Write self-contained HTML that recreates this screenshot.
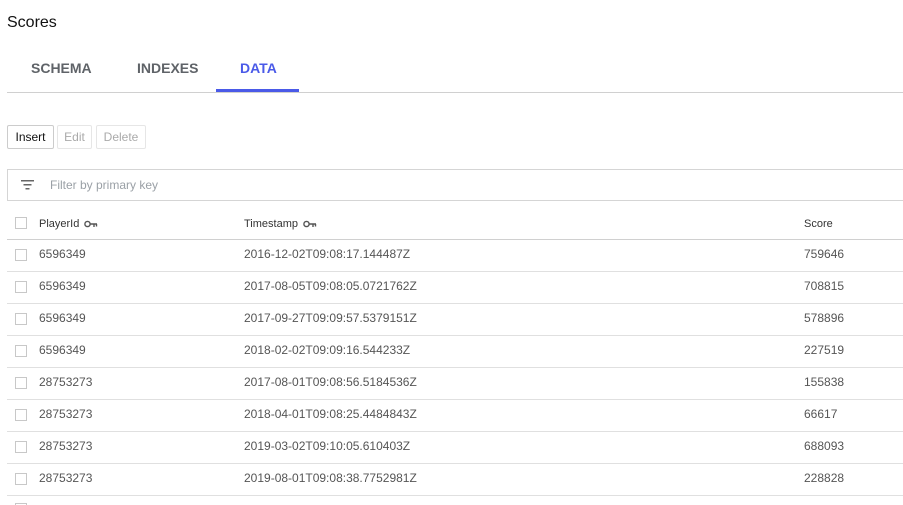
<!DOCTYPE html>
<html><head><style>
*{box-sizing:border-box;margin:0;padding:0}
html,body{width:903px;height:505px;overflow:hidden}
body{background:#fff;font-family:"Liberation Sans",sans-serif;position:relative;color:#202124}
.a{position:absolute}
.tab{position:absolute;top:60px;font-size:14px;font-weight:bold;color:#5f6368}
.btn{position:absolute;top:125px;height:24px;border:1px solid #dadce0;border-radius:2px;font-size:12px;line-height:22px;text-align:center}
.cb{position:absolute;left:15px;width:12px;height:12px;border:1px solid #c8c8c8}
.row{position:absolute;left:7px;width:896px;height:32px;border-bottom:1px solid #e0e0e0;font-size:12px;color:#555}
.row span{position:absolute;top:7px}
.key{display:inline-block;vertical-align:middle;margin-left:5px}
</style></head><body>
<div class="a" style="left:7px;top:14px;font-size:16px;color:#111">Scores</div>
<div class="tab" style="left:31px">SCHEMA</div>
<div class="tab" style="left:137px">INDEXES</div>
<div class="tab" style="left:240px;color:#4a5ae8">DATA</div>
<div class="a" style="left:216px;top:89px;width:83px;height:3px;background:#4a5ae8"></div>
<div class="a" style="left:7px;top:92px;width:896px;height:1px;background:#d0d0d0"></div>
<div class="btn" style="left:7px;width:47px;color:#111;border-color:#ccc">Insert</div>
<div class="btn" style="left:57px;width:35px;color:#aaa;border-color:#e6e6e6">Edit</div>
<div class="btn" style="left:96px;width:50px;color:#aaa;border-color:#e6e6e6">Delete</div>
<div class="a" style="left:7px;top:169px;width:900px;height:32px;border:1px solid #d5d5d5"></div>
<svg class="a" style="left:20px;top:178px" width="16" height="14"><rect x="1" y="2" width="13" height="1.5" fill="#666"/><rect x="3.5" y="6" width="8" height="1.5" fill="#666"/><rect x="5.5" y="10" width="4" height="1.5" fill="#666"/></svg>
<div class="a" style="left:50px;top:178px;font-size:12px;color:#9aa0a6">Filter by primary key</div>
<div class="row" style="top:207px;height:33px;border-bottom:1px solid #d0d0d0;color:#333;font-size:11px">
<span style="left:32px;top:11px">PlayerId<svg class="key" width="14" height="8"><circle cx="3.5" cy="4" r="2.6" fill="none" stroke="#555" stroke-width="1.4"/><path d="M6 4H13M10 4V7M12.5 4V6.5" stroke="#555" stroke-width="1.4" fill="none"/></svg></span>
<span style="left:237px;top:11px">Timestamp<svg class="key" width="14" height="8"><circle cx="3.5" cy="4" r="2.6" fill="none" stroke="#555" stroke-width="1.4"/><path d="M6 4H13M10 4V7M12.5 4V6.5" stroke="#555" stroke-width="1.4" fill="none"/></svg></span>
<span style="left:797px;top:11px">Score</span></div>
<div class="cb" style="top:217px"></div>
<div class="row" style="top:240px"><span style="left:32px">6596349</span><span style="left:237px">2016-12-02T09:08:17.144487Z</span><span style="left:797px">759646</span></div><div class="cb" style="top:249px"></div>
<div class="row" style="top:272px"><span style="left:32px">6596349</span><span style="left:237px">2017-08-05T09:08:05.0721762Z</span><span style="left:797px">708815</span></div><div class="cb" style="top:281px"></div>
<div class="row" style="top:304px"><span style="left:32px">6596349</span><span style="left:237px">2017-09-27T09:09:57.5379151Z</span><span style="left:797px">578896</span></div><div class="cb" style="top:313px"></div>
<div class="row" style="top:336px"><span style="left:32px">6596349</span><span style="left:237px">2018-02-02T09:09:16.544233Z</span><span style="left:797px">227519</span></div><div class="cb" style="top:345px"></div>
<div class="row" style="top:368px"><span style="left:32px">28753273</span><span style="left:237px">2017-08-01T09:08:56.5184536Z</span><span style="left:797px">155838</span></div><div class="cb" style="top:377px"></div>
<div class="row" style="top:400px"><span style="left:32px">28753273</span><span style="left:237px">2018-04-01T09:08:25.4484843Z</span><span style="left:797px">66617</span></div><div class="cb" style="top:409px"></div>
<div class="row" style="top:432px"><span style="left:32px">28753273</span><span style="left:237px">2019-03-02T09:10:05.610403Z</span><span style="left:797px">688093</span></div><div class="cb" style="top:441px"></div>
<div class="row" style="top:464px"><span style="left:32px">28753273</span><span style="left:237px">2019-08-01T09:08:38.7752981Z</span><span style="left:797px">228828</span></div><div class="cb" style="top:473px"></div>
<div class="cb" style="top:503px"></div>
</body></html>
